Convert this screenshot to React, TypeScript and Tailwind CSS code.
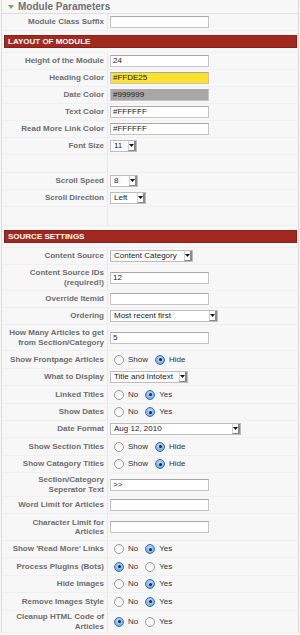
import React from "react";

type RowProps = { label: string[]; h: string; children?: React.ReactNode };

function Row({ label, h, children }: RowProps) {
  return (
    <div className={`flex border-b border-[#f0f0f0] ${h}`}>
      <div className="w-[106px] shrink-0 border-r border-[#e8e8e8] flex flex-col items-end justify-center pr-[3px] text-right font-bold text-[8px] leading-[9.5px] text-[#6e6e6e]">
        {label.map((l, i) => (
          <div key={i} className="whitespace-nowrap">{l}</div>
        ))}
      </div>
      <div className="flex items-center pl-[2px] grow">{children}</div>
    </div>
  );
}

function TextInput({ value = "", bg = "bg-white" }: { value?: string; bg?: string }) {
  return (
    <div className={`w-[99px] h-[12px] border border-[#c4c4c4] border-t-[#a8a8a8] ${bg} flex items-center pl-[2px] text-[8px] text-[#222] leading-none`}>
      {value}
    </div>
  );
}

function Select({ value, w }: { value: string; w: string }) {
  return (
    <div className={`${w} h-[12px] border border-[#bdbdbd] bg-white flex items-stretch text-[8px] text-[#222] leading-none`}>
      <div className="grow flex items-center pl-[3px] whitespace-nowrap overflow-hidden">{value}</div>
      <div className="w-[8px] border-l border-[#d0d0d0] border-r-2 border-r-[#8a8a8a] border-b border-b-[#8a8a8a] flex items-center justify-center">
        <svg width="5" height="3" viewBox="0 0 5 3">
          <path d="M0 0 L5 0 L2.5 3 Z" fill="#111" />
        </svg>
      </div>
    </div>
  );
}

function Radio({ on }: { on: boolean }) {
  return on ? (
    <div className="w-[10px] h-[10px] rounded-full border border-[#3d6fb5] bg-[radial-gradient(circle_at_50%_35%,#bfdcf7,#5b98dd)] flex items-center justify-center shrink-0">
      <div className="w-[3px] h-[3px] rounded-full bg-[#14284a]" />
    </div>
  ) : (
    <div className="w-[10px] h-[10px] rounded-full border border-[#9a9a9a] bg-[linear-gradient(#f2f2f2,#ffffff)] shrink-0" />
  );
}

function Radios({ a, b, sel }: { a: string; b: string; sel: 0 | 1 }) {
  return (
    <div className="flex items-center ml-[4px] text-[8px] text-[#333] leading-none">
      <Radio on={sel === 0} />
      <span className="ml-[4px] mr-[7px]">{a}</span>
      <Radio on={sel === 1} />
      <span className="ml-[4px]">{b}</span>
    </div>
  );
}

function Bar({ title, pt, pb }: { title: string; pt: string; pb: string }) {
  return (
    <div className={`${pt} ${pb} pl-[2px] pr-[1px] border-b border-[#f0f0f0]`}>
      <div className="h-[13px] bg-[#a2291f] border border-[#8a1f17] flex items-center pl-[3px] text-white font-bold text-[8px] leading-none">
        {title}
      </div>
    </div>
  );
}

export default function App() {
  return (
    <div className="w-[300px] h-[635px] bg-[#f7f7f7] overflow-hidden font-['Liberation_Sans',Arial,sans-serif]">
      <div className="ml-[1px] w-[298px] border-l border-r border-[#dcdcdc] bg-[#f7f7f7]">
        <div className="h-[14px] border-b border-[#dedede] flex items-center pl-[6px] gap-[4px]">
          <svg width="6" height="4" viewBox="0 0 6 4">
            <path d="M0 0 L6 0 L3 4 Z" fill="#7aa84c" />
          </svg>
          <span className="font-bold text-[10px] text-[#727272] leading-none">Module Parameters</span>
        </div>
        <Row label={["Module Class Suffix"]} h="h-[17px]">
          <TextInput />
        </Row>
        <Bar title="LAYOUT OF MODULE" pt="pt-[4px]" pb="pb-[4px]" />
        <Row label={["Height of the Module"]} h="h-[17px]">
          <TextInput value="24" />
        </Row>
        <Row label={["Heading Color"]} h="h-[17px]">
          <TextInput value="#FFDE25" bg="bg-[#fde12d]" />
        </Row>
        <Row label={["Date Color"]} h="h-[17px]">
          <TextInput value="#999999" bg="bg-[#a7a7a7]" />
        </Row>
        <Row label={["Text Color"]} h="h-[17px]">
          <TextInput value="#FFFFFF" />
        </Row>
        <Row label={["Read More Link Color"]} h="h-[17px]">
          <TextInput value="#FFFFFF" />
        </Row>
        <Row label={["Font Size"]} h="h-[17px]">
          <Select value="11" w="w-[27px]" />
        </Row>
        <Row label={[""]} h="h-[18px]" />
        <Row label={["Scroll Speed"]} h="h-[17px]">
          <Select value="8" w="w-[28px]" />
        </Row>
        <Row label={["Scroll Direction"]} h="h-[17px]">
          <Select value="Left" w="w-[36px]" />
        </Row>
        <Row label={[""]} h="h-[19px]" />
        <Bar title="SOURCE SETTINGS" pt="pt-[4px]" pb="pb-[4px]" />
        <Row label={["Content Source"]} h="h-[17px]">
          <Select value="Content Category" w="w-[83px]" />
        </Row>
        <Row label={["Content Source IDs", "(required!)"]} h="h-[26px]">
          <TextInput value="12" />
        </Row>
        <Row label={["Override Itemid"]} h="h-[17px]">
          <TextInput />
        </Row>
        <Row label={["Ordering"]} h="h-[17px]">
          <Select value="Most recent first" w="w-[108px]" />
        </Row>
        <Row label={["How Many Articles to get", "from Section/Category"]} h="h-[26px]">
          <TextInput value="5" />
        </Row>
        <Row label={["Show Frontpage Articles"]} h="h-[18px]">
          <Radios a="Show" b="Hide" sel={1} />
        </Row>
        <Row label={["What to Display"]} h="h-[17px]">
          <Select value="Title and Intotext" w="w-[78px]" />
        </Row>
        <Row label={["Linked Titles"]} h="h-[18px]">
          <Radios a="No" b="Yes" sel={1} />
        </Row>
        <Row label={["Show Dates"]} h="h-[17px]">
          <Radios a="No" b="Yes" sel={1} />
        </Row>
        <Row label={["Date Format"]} h="h-[17px]">
          <Select value="Aug 12, 2010" w="w-[131px]" />
        </Row>
        <Row label={["Show Section Titles"]} h="h-[18px]">
          <Radios a="Show" b="Hide" sel={1} />
        </Row>
        <Row label={["Show Catagory Titles"]} h="h-[17px]">
          <Radios a="Show" b="Hide" sel={1} />
        </Row>
        <Row label={["Section/Category", "Seperator Text"]} h="h-[24px]">
          <TextInput value=">>" />
        </Row>
        <Row label={["Word Limit for Articles"]} h="h-[17px]">
          <TextInput />
        </Row>
        <Row label={["Character Limit for", "Articles"]} h="h-[27px]">
          <TextInput />
        </Row>
        <Row label={["Show 'Read More' Links"]} h="h-[17px]">
          <Radios a="No" b="Yes" sel={1} />
        </Row>
        <Row label={["Process Plugins (Bots)"]} h="h-[18px]">
          <Radios a="No" b="Yes" sel={0} />
        </Row>
        <Row label={["Hide Images"]} h="h-[17px]">
          <Radios a="No" b="Yes" sel={1} />
        </Row>
        <Row label={["Remove Images Style"]} h="h-[18px]">
          <Radios a="No" b="Yes" sel={1} />
        </Row>
        <Row label={["Cleanup HTML Code of", "Articles"]} h="h-[22px]">
          <Radios a="No" b="Yes" sel={0} />
        </Row>
      </div>
    </div>
  );
}
